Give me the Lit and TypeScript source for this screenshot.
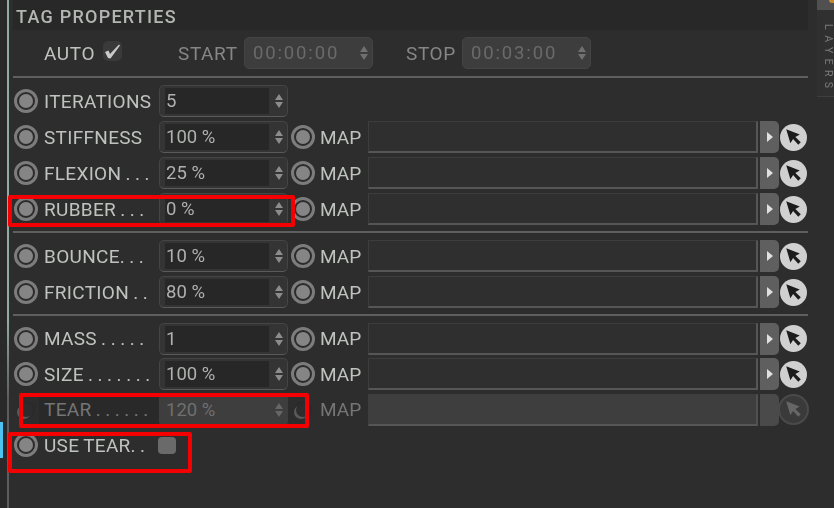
import {LitElement, html, css, nothing} from 'lit';
import {customElement} from 'lit/decorators.js';

type Row = {label: string; value: string; map?: boolean; off?: boolean};

const groups: Row[][] = [
  [
    {label: 'ITERATIONS', value: '5'},
    {label: 'STIFFNESS', value: '100 %', map: true},
    {label: 'FLEXION . . .', value: '25 %', map: true},
    {label: 'RUBBER . . .', value: '0 %', map: true},
  ],
  [
    {label: 'BOUNCE. . .', value: '10 %', map: true},
    {label: 'FRICTION . .', value: '80 %', map: true},
  ],
  [
    {label: 'MASS . . . . .', value: '1', map: true},
    {label: 'SIZE . . . . . . .', value: '100 %', map: true},
    {label: 'TEAR . . . . . .', value: '120 %', map: true, off: true},
  ],
];

const arrows = html`<svg class="updown" width="8" height="14" viewBox="0 0 8 14">
  <path d="M4 0 L8 6 H0 Z M4 14 L0 8 H8 Z"></path>
</svg>`;

@customElement('app-root')
export class AppRoot extends LitElement {
  static styles = css`
    :host {
      display: block;
      width: 834px;
      height: 508px;
      position: relative;
      overflow: hidden;
      background: #2e2d2d;
      font-family: Roboto, 'Liberation Sans', sans-serif;
      font-weight: 400;
      color: #bfc3bf;
    }
    .app {
      display: flex;
      height: 508px;
      filter: blur(0.55px);
    }
    .edge {
      width: 7px;
      background: #292929;
      flex: none;
      display: flex;
    }
    .edge i {
      display: block;
      width: 3px;
      height: 36px;
      margin-top: 422px;
      background: #4fc3ef;
    }
    .line {
      width: 2px;
      flex: none;
      background: linear-gradient(#93aaa6 0, #93aaa6 320px, #5c5c5c 400px);
    }
    .main {
      width: 799px;
      padding-left: 4px;
      box-sizing: border-box;
      flex: none;
    }
    .title {
      height: 30px;
      box-sizing: border-box;
      padding: 4px 0 0 3px;
      background: #282828;
      font-size: 18px;
      font-weight: 500;
      line-height: 26px;
      letter-spacing: 1.25px;
      color: #b3b6b2;
    }
    .top {
      height: 46px;
      display: flex;
      align-items: center;
      padding-left: 31px;
      font-size: 19px;
      letter-spacing: 0.6px;
    }
    .top .auto {
      width: 59px;
    }
    .check {
      width: 19px;
      height: 20px;
      margin-top: -4px;
      border-radius: 5px;
      background: #3a3a3a;
      display: flex;
      align-items: center;
      justify-content: center;
    }
    .top .dim {
      color: #868686;
      width: 66px;
      margin-left: 56px;
    }
    .top .stop {
      margin-left: 33px;
      width: 56px;
    }
    .spin {
      width: 129px;
      height: 32px;
      box-sizing: border-box;
      display: flex;
      align-items: center;
      border: 1px solid #454545;
      border-bottom-color: #5a5a5a;
      border-radius: 5px;
      background: #343434;
      font-size: 18.5px;
      letter-spacing: 0;
      padding-right: 4px;
      color: #aeb1ae;
    }
    .spin .val {
      flex: 1;
      align-self: stretch;
      margin: 2px 6px 2px 5px;
      padding-left: 1px;
      line-height: 26px;
      background: #272727;
      white-space: pre;
    }
    .updown {
      fill: #8c8c8c;
      flex: none;
    }
    .spin.time {
      background: #3d3d3d;
      border-color: #444;
      color: #6a6a6a;
      letter-spacing: 1.85px;
    }
    .spin.time .val {
      background: none;
      margin-left: 7px;
    }
    .spin.time .updown {
      fill: #707070;
    }
    .sep {
      height: 2px;
      background: #5f5f5f;
      margin: 4px 0 5px;
    }
    .sep.first {
      margin: 0 0 5px;
    }
    .row {
      display: grid;
      grid-template-columns: 26px 120px 129px 30px 50px 390px 21px 29px;
      height: 36px;
      align-items: center;
      font-size: 19px;
      white-space: nowrap;
    }
    .row.tight {
      height: 35.5px;
    }
    .radio {
      justify-self: center;
      width: 24px;
      height: 24px;
      box-sizing: border-box;
      border-radius: 50%;
      border: 3px solid #7c7c7c;
      display: flex;
      align-items: center;
      justify-content: center;
      background: #2c2c2c;
    }
    .radio::after {
      content: '';
      width: 14px;
      height: 14px;
      border-radius: 50%;
      background: #858585;
    }
    .label {
      padding-left: 5px;
      letter-spacing: 0.3px;
      word-spacing: -0.8px;
    }
    .map {
      padding-left: 2px;
    }
    .field {
      height: 32px;
      box-sizing: border-box;
      border: 1px solid #3d3d3d;
      border-right: 2px solid #565656;
      border-bottom: 2px solid #565656;
      background: #2f2f2f;
    }
    .go {
      height: 32px;
      margin-left: 2px;
      border-radius: 0 5px 5px 0;
      background: #5f5f5f;
      display: flex;
      align-items: center;
      justify-content: center;
    }
    .go svg {
      fill: #e0e0e0;
    }
    .pick {
      justify-self: end;
      width: 27px;
      height: 27px;
      margin-right: 1px;
      border-radius: 50%;
      background: #d0d0d0;
      display: block;
      fill: #1c1c1c;
    }
    .row.off {
      color: #757575;
    }
    .row.off .label {
      background: #292929;
      line-height: 28px;
    }
    .row.off .spin {
      background: #3e3e3e;
      border-color: #3e3e3e;
      border-bottom-color: #565656;
      color: #6f6f6f;
    }
    .row.off .val {
      background: none;
    }
    .row.off .updown {
      fill: #666;
    }
    .row.off .radio {
      border-color: #2e2d2d;
      background: #2a2a2a;
    }
    .row.off .radio::after {
      background: #2e2d2d;
      box-shadow: -2px 2px 0 #5a5a5a;
    }
    .row.off .field {
      background: #3e3e3e;
      border-color: #3e3e3e;
      border-bottom-color: #565656;
      border-right-color: #505050;
    }
    .row.off .go {
      background: #4a4a4a;
    }
    .row.off .pick {
      background: #3a3a3a;
      box-shadow: 0 0 0 2px #4a4a4a;
      fill: #666;
    }
    .box {
      width: 18px;
      height: 17px;
      border-radius: 4px;
      background: #6a6a6a;
      margin-left: -1px;
    }
    .side {
      flex: 1;
      margin-left: 9px;
    }
    .tick {
      height: 10px;
      background: #505050;
      display: flex;
      justify-content: flex-end;
    }
    .tick i {
      width: 5px;
      height: 3px;
      background: #c98a2e;
      border-radius: 0 0 0 3px;
    }
    .tab {
      height: 87px;
      box-sizing: border-box;
      border-bottom: 1px solid #3e3e3e;
      background: #303030;
    }
    .tab span {
      display: block;
      writing-mode: vertical-rl;
      font-size: 10.5px;
      line-height: 12px;
      letter-spacing: 5.4px;
      padding: 14px 0 0 5px;
      color: #7a7a7a;
    }
    .mark {
      position: absolute;
      box-sizing: border-box;
      border: 4px solid #f40000;
      border-radius: 2px;
    }
    .mark.rubber {
      left: 8px;
      top: 195px;
      width: 287px;
      height: 32px;
    }
    .mark.tear {
      left: 19px;
      top: 393px;
      width: 290px;
      height: 35px;
    }
    .mark.use {
      left: 8px;
      top: 432px;
      width: 184px;
      height: 41px;
    }
  `;

  renderPick() {
    return html`<svg class="pick" viewBox="0 0 26 26">
      <path d="M6 5 L10 18.5 L12.6 14.4 L17.6 20 L20 17.6 L14.8 12.4 L19 10 Z"></path>
    </svg>`;
  }

  renderRow(row: Row, tight: boolean) {
    return html`<div class="row ${tight ? 'tight' : ''} ${row.off ? 'off' : ''}">
      <span class="radio"></span>
      <span class="label">${row.label}</span>
      <div class="spin"><span class="val">${row.value}</span>${arrows}</div>
      ${row.map
        ? html`<span class="radio"></span>
            <span class="map">MAP</span>
            <div class="field"></div>
            <div class="go">
              ${row.off
                ? nothing
                : html`<svg width="6" height="10" viewBox="0 0 6 10"><path d="M0 0 L6 5 L0 10 Z"></path></svg>`}
            </div>
            ${this.renderPick()}`
        : nothing}
    </div>`;
  }

  render() {
    return html`
      <div class="app">
        <div class="edge"><i></i></div>
        <div class="line"></div>
        <div class="main">
          <div class="title">TAG PROPERTIES</div>
          <div class="top">
            <span class="auto">AUTO</span>
            <span class="check">
              <svg width="17" height="15" viewBox="0 0 17 15">
                <path d="M1 8 L4.5 6.5 L6 10 L15 0.5 L16 1.5 L6.5 14.5 L4 14 Z" fill="#c8cbc8"></path>
              </svg>
            </span>
            <span class="dim">START</span>
            <div class="spin time"><span class="val">00:00:00</span>${arrows}</div>
            <span class="dim stop">STOP</span>
            <div class="spin time"><span class="val">00:03:00</span>${arrows}</div>
          </div>
          <div class="sep first"></div>
          ${groups.map(
            (rows, i) => html`
              ${rows.map((r) => this.renderRow(r, i === 2))}
              ${i < 2 ? html`<div class="sep"></div>` : nothing}
            `
          )}
          <div class="row tight">
            <span class="radio"></span>
            <span class="label">USE TEAR. .</span>
            <span class="box"></span>
          </div>
        </div>
        <div class="side">
          <div class="tick"><i></i></div>
          <div class="tab"><span>LAYERS</span></div>
        </div>
      </div>
      <div class="mark rubber"></div>
      <div class="mark tear"></div>
      <div class="mark use"></div>
    `;
  }
}
